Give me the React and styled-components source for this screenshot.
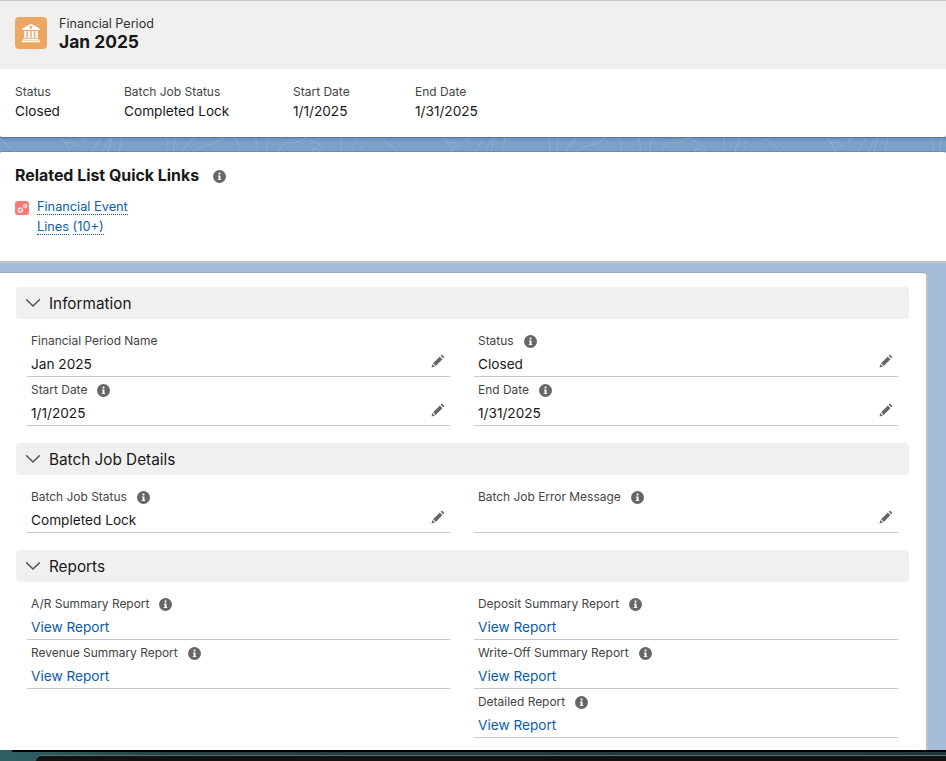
import React from "react";
import styled, { createGlobalStyle } from "styled-components";

const Global = createGlobalStyle`
  html, body { margin: 0; padding: 0; background: #a5bcd9; }
  body { font-family: Inter, "Liberation Sans", sans-serif; color: #181818; -webkit-font-smoothing: antialiased; }
  * { box-sizing: border-box; }
`;

const Page = styled.div`
  width: 946px; height: 761px; overflow: hidden; display: flex; flex-direction: column; background: #a5bcd9;
`;
const HighlightsCard = styled.header`
  background: #fff; border-top: 1px solid #c4c4c4; border-radius: 0 0 2px 2px; height: 137px;
  box-shadow: 0 1px 1px rgba(0,0,0,.2); flex: none; position: relative; z-index: 1;
`;
const TitleBar = styled.div`
  height: 68px; background: #f0f0f0; display: flex; align-items: flex-start; gap: 12px; padding: 16px 15px 0;
`;
const EntityIcon = styled.div`
  width: 32px; height: 32px; border-radius: 4px; background: #eca862; display: flex; align-items: center; justify-content: center; flex: none;
`;
const TitleText = styled.div`display: flex; flex-direction: column; margin-top: -1px;`;
const Eyebrow = styled.div`font-size: 12.6px; line-height: 16px; color: #333;`;
const Title = styled.div`font-size: 17.4px; line-height: 21px; font-weight: 700; color: #181818; margin-top: -1px;`;
const Facts = styled.div`display: flex; padding: 15px 15px 0;`;
const Fact = styled.div`width: ${p => p.$w}px; flex: none;`;
const FactLabel = styled.div`font-size: 12px; line-height: 16px; color: #444;`;
const FactValue = styled.div`font-size: 13.65px; line-height: 20px; color: #181818; margin-top: 1px;`;

const Band = styled.div`
  height: 15px; flex: none; background: linear-gradient(#6790bb, #7ba2ca 40%, #78a0c8); overflow: hidden;
  svg { display: block; }
`;
const QuickLinks = styled.section`
  height: 109px; flex: none; background: #fff; border-radius: 2px 2px 0 0; padding: 14px 15px 0;
  box-shadow: 0 -1px 0 rgba(0,0,0,.12), 0 1px 0 #b9bcc0, 0 2px 0 #c3c9d1; position: relative; z-index: 1;
`;
const QuickHeading = styled.div`display: flex; align-items: center; gap: 14px; height: 20px;`;
const QuickTitle = styled.h2`margin: 0; font-size: 15.9px; line-height: 20px; font-weight: 700; color: #181818;`;
const QuickRow = styled.div`display: flex; gap: 8px; margin-top: 11px; align-items: flex-start;`;
const QuickIcon = styled.div`
  width: 14px; height: 14px; margin-top: 4px; border-radius: 3px; background: #fa7878; display: flex; align-items: center; justify-content: center; flex: none;
`;
const QuickLink = styled.a`
  width: 100px; font-size: 12.75px; line-height: 20px; color: #0b5cab;
  span { border-bottom: 1px dotted #0b5cab; }
`;
const Gap = styled.div`height: 12px; flex: none;`;
const Details = styled.main`
  width: 926px; height: 477px; flex: none; background: #fff; border-radius: 0 3px 0 0; padding: 14px 17px 0 16px;
  box-shadow: 0 -1px 0 rgba(0,0,0,.1), 2px 0 0 #bcc1c8;
`;
const SectionHead = styled.div`
  height: 32px; background: #f0f0f0; border-radius: 4px; display: flex; align-items: center; gap: 8px; padding-left: 9px;
  font-size: 15.3px; color: #181818;
`;
const Grid = styled.div`
  display: grid; grid-template-columns: 423px 424px; column-gap: 24px; margin: 9px 0 17px 11px;
  grid-auto-rows: 49px;
`;
const Field = styled.div`
  position: relative; padding: 0 0 0 4px; border-bottom: ${p => p.$empty ? "none" : "1px solid #c9c9c9"};
`;
const Label = styled.div`
  display: flex; align-items: center; gap: 10px; height: 16px; margin-top: 5px; font-size: 11.95px; line-height: 16px; color: #444;
`;
const Value = styled.div`font-size: 13.65px; line-height: 20px; height: 20px; margin-top: 5px; color: #181818;`;
const ReportLink = styled.a`font-size: 13.65px; line-height: 20px; color: #0b5cab;`;
const EditBtn = styled.span`
  position: absolute; right: 5px; top: 26px; width: 14px; height: 14px; display: flex;
`;
const Bottom = styled.div`
  height: 11px; flex: none; background: linear-gradient(90deg, #2f6062 0, #2b5658 8%, #24403f 18%, #26393a 60%, #22393c 100%);
`;
const BottomLine = styled.div`height: 2px; background: #000; margin-left: 12px;`;
const BottomDark = styled.div`
  height: 6px; background: #121212; margin: 3px 0 0 36px; border-top: 1px solid #5d6f68; border-radius: 8px 0 0 0;
`;

const Info = () => (
  <svg width="13" height="13" viewBox="0 0 13 13" style={{ flex: "none" }}>
    <circle cx="6.5" cy="6.5" r="6.5" fill="#666" />
    <rect x="5.6" y="2.6" width="1.9" height="1.8" rx=".4" fill="#fff" />
    <path d="M4.9 5.4h2.6v3.5h.7v1.1H4.8V8.9h.8V6.5h-.7z" fill="#fff" />
  </svg>
);
const Pencil = () => (
  <svg width="14" height="14" viewBox="0 0 14 14">
    <path d="M10.9.6l2.5 2.5-1.2 1.2-2.5-2.5zM8.8 2.6l2.6 2.6-6.7 6.7-2.6-2.6zM1.3 10.1l2.6 2.6-3.4.8z" fill="#666" />
  </svg>
);
const Chevron = () => (
  <svg width="16" height="16" viewBox="0 0 16 16">
    <path d="M1.6 4.8L8 11l6.4-6.2" fill="none" stroke="#555" strokeWidth="1.6" strokeLinecap="round" strokeLinejoin="round" />
  </svg>
);
const Bank = () => (
  <svg width="20" height="20" viewBox="0 0 20 20">
    <path d="M10 .8L18.6 5.6v1.4H1.4V5.6z" fill="#fff" />
    <circle cx="10" cy="4.4" r="1.3" fill="#eca862" />
    <path d="M3.2 8h2.4v7H3.2zM6.9 8h2.4v7H6.9zM10.7 8h2.4v7h-2.4zM14.4 8h2.4v7h-2.4zM2.4 15.8h15.2v1.2H2.4zM1 17.4h18v1.8H1z" fill="#fff" />
  </svg>
);
const Gears = () => (
  <svg width="13" height="13" viewBox="0 0 13 13">
    <circle cx="4.4" cy="8.2" r="2" fill="none" stroke="#fff" strokeWidth="1.7" strokeDasharray="1.2 .5" />
    <circle cx="9.2" cy="4" r="1.5" fill="none" stroke="#fff" strokeWidth="1.5" strokeDasharray="1 .4" />
  </svg>
);

const Texture = () => (
  <svg width="946" height="15" viewBox="0 0 946 15">
    <defs>
      <pattern id="topo" x="0" y="0" width="383" height="15" patternUnits="userSpaceOnUse">
        <path
          fill="none" stroke="#a3bfdc" strokeWidth=".8" opacity=".55"
          d="M0 2L15 15M60 0c4 4 8 9 9 15M64 6l11-1M69 11l9-3M82 4l5-4M92 15l8-13M102 15l8-15M108 15l4-15M119 15l3-15M165 0c3 5 3 10 1 15M174 15c-1-5 1-10 2-15M183 15c3-8 8-12 12-15M193 15c8-8 20-5 30-15M233 0c6 4 8 10 4 15M255 0c2 5 3 10 2 15M267 15c-1-6 1-11 3-15M279 15c2-8 6-11 12-9c6-1 12-3 16-6M312 15a3.500 3.500 0 0 1 7 0M310 3c6 2 12 6 13 12M340 0c2 5 2 10 0 15M352 15c1-6 3-10 5-15M362 7l1-3M361 12l1-3"
        />
      </pattern>
    </defs>
    <rect width="946" height="15" fill="url(#topo)" />
  </svg>
);

const sections = [
  { title: "Information", fields: [
    { label: "Financial Period Name", value: "Jan 2025", edit: true },
    { label: "Status", value: "Closed", edit: true, info: true },
    { label: "Start Date", value: "1/1/2025", edit: true, info: true },
    { label: "End Date", value: "1/31/2025", edit: true, info: true },
  ]},
  { title: "Batch Job Details", fields: [
    { label: "Batch Job Status", value: "Completed Lock", edit: true, info: true },
    { label: "Batch Job Error Message", value: "", edit: true, info: true },
  ]},
  { title: "Reports", fields: [
    { label: "A/R Summary Report", link: true, info: true },
    { label: "Deposit Summary Report", link: true, info: true },
    { label: "Revenue Summary Report", link: true, info: true },
    { label: "Write-Off Summary Report", link: true, info: true },
    { empty: true },
    { label: "Detailed Report", link: true, info: true },
  ]},
];

const facts = [
  { label: "Status", value: "Closed", w: 109 },
  { label: "Batch Job Status", value: "Completed Lock", w: 169 },
  { label: "Start Date", value: "1/1/2025", w: 122 },
  { label: "End Date", value: "1/31/2025", w: 120 },
];

export default function App() {
  return (
    <Page>
      <Global />
      <HighlightsCard>
        <TitleBar>
          <EntityIcon><Bank /></EntityIcon>
          <TitleText>
            <Eyebrow>Financial Period</Eyebrow>
            <Title>Jan 2025</Title>
          </TitleText>
        </TitleBar>
        <Facts>
          {facts.map(f => (
            <Fact key={f.label} $w={f.w}>
              <FactLabel>{f.label}</FactLabel>
              <FactValue>{f.value}</FactValue>
            </Fact>
          ))}
        </Facts>
      </HighlightsCard>
      <Band><Texture /></Band>
      <QuickLinks>
        <QuickHeading>
          <QuickTitle>Related List Quick Links</QuickTitle>
          <Info />
        </QuickHeading>
        <QuickRow>
          <QuickIcon><Gears /></QuickIcon>
          <QuickLink><span>Financial Event</span> <span>Lines</span> <span>(10+)</span></QuickLink>
        </QuickRow>
      </QuickLinks>
      <Gap />
      <Details>
        {sections.map(s => (
          <section key={s.title}>
            <SectionHead><Chevron />{s.title}</SectionHead>
            <Grid>
              {s.fields.map((f, i) => f.empty ? <Field key={i} $empty /> : (
                <Field key={f.label}>
                  <Label>{f.label}{f.info && <Info />}</Label>
                  <Value>{f.link ? <ReportLink>View Report</ReportLink> : f.value}</Value>
                  {f.edit && <EditBtn><Pencil /></EditBtn>}
                </Field>
              ))}
            </Grid>
          </section>
        ))}
      </Details>
      <Bottom>
        <BottomLine />
        <BottomDark />
      </Bottom>
    </Page>
  );
}
